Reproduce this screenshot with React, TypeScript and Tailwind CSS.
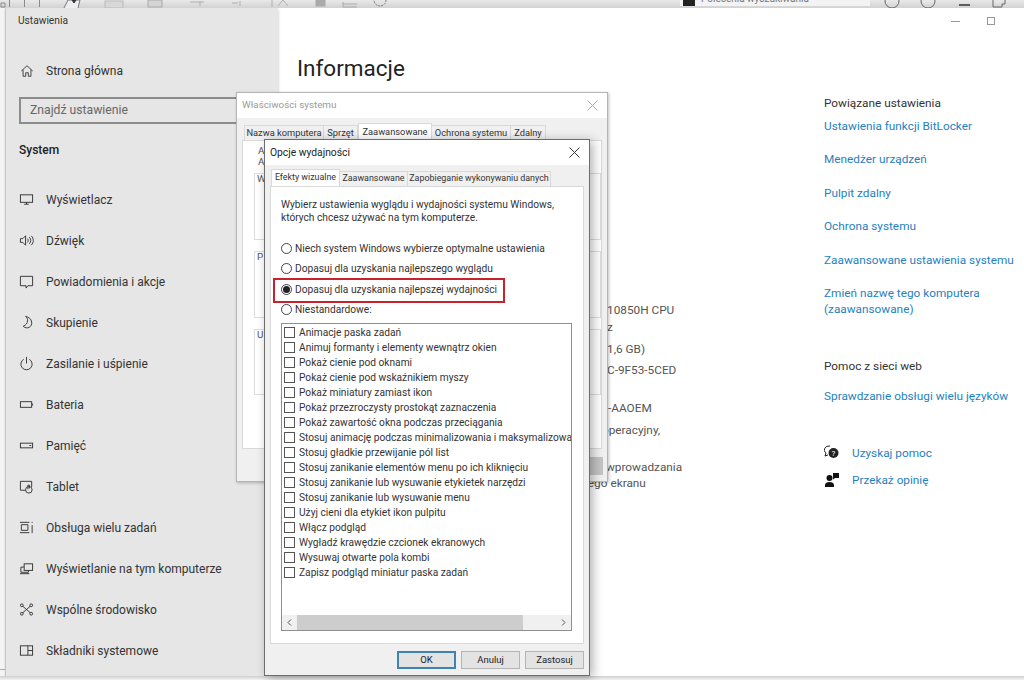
import React from "react";

const font = { fontFamily: 'Roboto, "Noto Sans", sans-serif' };

const Svg = ({ children, w = 16, h = 16 }: { children: React.ReactNode; w?: number; h?: number }) => (
  <svg width={w} height={h} viewBox="0 0 16 16" fill="none" stroke="#333" strokeWidth={1} className="shrink-0">
    {children}
  </svg>
);

const icons: Record<string, React.ReactNode> = {
  home: <path d="M1.5 8 8 2l6.5 6M3.5 6.5V14h3v-4h3v4h3V6.5" />,
  monitor: <><rect x="1.5" y="3" width="13" height="8" /><path d="M8 11v2M5.5 13h5" /></>,
  sound: <><path d="M1.5 6v4h2.5l3 3V3L4 6z" /><path d="M9 6c1 1 1 3 0 4M11 4.5c2 2 2 5 0 7M13 3c3 3 3 7 0 10" /></>,
  notif: <path d="M1.5 2.5h13v10H9.5L7.5 15v-2.5h-6z" />,
  moon: <path d="M7 1.5c3 2 3.5 8-2.5 10.5 4 4 10 0.5 9-4.5C13 4 10 2 7 1.5z" />,
  power: <><path d="M5 3.5a6 6 0 1 0 6 0" /><path d="M8 1v7" /></>,
  battery: <><rect x="1.5" y="5" width="12" height="6" /><path d="M14.5 7v2" /></>,
  storage: <><rect x="1.5" y="5.5" width="13" height="5" /><path d="M11 8h2" /></>,
  tablet: <><path d="M7 12H1.5V2.5h12v6" /><circle cx="10.5" cy="11.5" r="3.5" /><path d="M9.5 11V6.5h1.5V10" /></>,
  multi: <><path d="M1 2.5h10M1 13.5h10M2.5 5h7v6h-7zM14 2v1M14 5.500v8.500" /></>,
  project: <><rect x="5.500" y="3" width="9" height="7" /><path d="M5.500 6.500H2V12h8v-2M1 13.500h10" /></>,
  share: <><circle cx="3" cy="3.500" r="1.500" /><circle cx="13" cy="3.500" r="1.500" /><circle cx="3" cy="12.500" r="1.500" /><circle cx="13" cy="12.500" r="1.500" /><path d="M4 4.500l8 7M12 4.500l-8 7" /></>,
  comp: <><rect x="1.500" y="3" width="13" height="10" /><path d="M9.500 3v10M9.500 8h5" /></>,
};

const nav: [string, string][] = [
  ["monitor", "Wyświetlacz"],
  ["sound", "Dźwięk"],
  ["notif", "Powiadomienia i akcje"],
  ["moon", "Skupienie"],
  ["power", "Zasilanie i uśpienie"],
  ["battery", "Bateria"],
  ["storage", "Pamięć"],
  ["tablet", "Tablet"],
  ["multi", "Obsługa wielu zadań"],
  ["project", "Wyświetlanie na tym komputerze"],
  ["share", "Wspólne środowisko"],
  ["comp", "Składniki systemowe"],
];

const effects = [
  "Animacje paska zadań",
  "Animuj formanty i elementy wewnątrz okien",
  "Pokaż cienie pod oknami",
  "Pokaż cienie pod wskaźnikiem myszy",
  "Pokaż miniatury zamiast ikon",
  "Pokaż przezroczysty prostokąt zaznaczenia",
  "Pokaż zawartość okna podczas przeciągania",
  "Stosuj animację podczas minimalizowania i maksymalizowania okien",
  "Stosuj gładkie przewijanie pól list",
  "Stosuj zanikanie elementów menu po ich kliknięciu",
  "Stosuj zanikanie lub wysuwanie etykietek narzędzi",
  "Stosuj zanikanie lub wysuwanie menu",
  "Użyj cieni dla etykiet ikon pulpitu",
  "Włącz podgląd",
  "Wygładź krawędzie czcionek ekranowych",
  "Wysuwaj otwarte pola kombi",
  "Zapisz podgląd miniatur paska zadań",
];

const related = [
  "Ustawienia funkcji BitLocker",
  "Menedżer urządzeń",
  "Pulpit zdalny",
  "Ochrona systemu",
  "Zaawansowane ustawienia systemu",
];

const Radio = ({ label, checked }: { label: string; checked?: boolean }) => (
  <div className="flex h-[20.500px] items-center">
    <span className="flex h-[11px] w-[11px] shrink-0 items-center justify-center rounded-full border border-[#444] bg-white">
      {checked && <span className="h-[7px] w-[7px] rounded-full bg-[#222]" />}
    </span>
    <span className="ml-[3px] whitespace-nowrap">{label}</span>
  </div>
);

const Close = ({ color }: { color: string }) => (
  <svg width="11" height="11" viewBox="0 0 11 11" stroke={color} strokeWidth={1}>
    <path d="M0.500 0.500l10 10M10.500 0.500l-10 10" />
  </svg>
);

const Btn = ({ children, primary }: { children: string; primary?: boolean }) => (
  <div
    className={`flex h-[18px] w-[59px] items-center justify-center text-[9.500px] text-[#222] ${
      primary ? "border-2 border-[#3f83b5] bg-[#e3e3e3]" : "border border-[#b5b5b5] bg-[#e3e3e3]"
    }`}
  >
    {children}
  </div>
);

export default function App() {
  return (
    <div className="relative flex h-[680px] w-[1024px] flex-col overflow-hidden bg-white text-[#222]" style={font}>
      {/* top strip of the window behind */}
      <div className="relative flex h-[8px] shrink-0 items-start overflow-hidden bg-gradient-to-b from-[#e9e9e9] to-[#d2d2d2]">
        <svg width="420" height="8" viewBox="0 0 420 8" className="shrink-0" fill="none" stroke="#8a8a8a">
          <path d="M1 3h4v4H1zM9.500 0v7M24.500 0v7M39.500 0v7" />
          <path d="M64 8l4-8h12l-2 8" stroke="#777" fill="#eee" />
          <path d="M72 0l2 3 2-3" fill="#334" stroke="#334" />
          <rect x="105" y="1" width="18" height="7" fill="#d8d8d8" stroke="#bbb" />
          <rect x="148" y="0" width="14" height="7" fill="#d4d4d4" stroke="#aaa" />
          <path d="M190 2h14M200 1v5M232 3h6M240 1v5M272 0v7M278 6l5-6 5 6" stroke="#b0b0b0" />
          <rect x="316" y="0" width="9" height="6" fill="#aaa" stroke="#aaa" />
          <path d="M343 2v5h14M343 4h14" stroke="#aaa" />
          <circle cx="380" cy="0" r="6" stroke="#777" strokeDasharray="2 1" />
        </svg>
        <div className="ml-[260px] flex h-[6px] w-[190px] shrink-0 overflow-hidden bg-[#f3f3f3] pl-[3px]">
          <span className="h-[6px] w-[12px] shrink-0 bg-[#222]" />
          <span className="-mt-[9px] ml-[6px] whitespace-nowrap text-[10px] leading-[16px] text-[#777]">Polecenia wyszukiwania</span>
        </div>
        <svg width="135" height="8" viewBox="0 0 135 8" className="ml-[10px] shrink-0" fill="none" stroke="#666">
          <circle cx="12" cy="1" r="7" />
          <circle cx="48" cy="1" r="7" />
          <path d="M79 5h11" stroke="#333" strokeWidth={1.500} />
          <path d="M113 -2h12v6h-3v3h-9z" />
        </svg>
      </div>

      <div className="flex min-h-0 flex-1">
        {/* gutter */}
        <div className="flex w-[6px] shrink-0 flex-col justify-end border-r border-[#c9c9c9] bg-[#f4f4f4] pb-[6px]">
          <div className="h-px bg-[#aaa]" />
        </div>

        {/* sidebar */}
        <aside className="flex w-[272px] shrink-0 flex-col bg-[#e6e6e6] text-[12px] text-[#333] shadow-[0_2px_3px_#bbb]">
          <div className="ml-[12px] mt-[6px] text-[10.200px] leading-[14px]">Ustawienia</div>
          <div className="ml-[14px] mt-[32.500px] flex h-[20px] items-center">
            <Svg w={14} h={14}>{icons.home}</Svg>
            <span className="ml-[12px]">Strona główna</span>
          </div>
          <div className="ml-[13px] mt-[16.500px] flex h-[27px] w-[245px] items-center border-2 border-[#8c8c8c] pl-[9px] text-[12.200px] text-[#666]">
            Znajdź ustawienie
          </div>
          <div className="ml-[13px] mt-[16px] text-[12px] font-medium leading-[20px] text-[#222]">System</div>
          <div className="mt-[19px] flex flex-col">
            {nav.map(([icon, label]) => (
              <div key={label} className="flex h-[41px] items-center pl-[13px]">
                <Svg w={15} h={15}>{icons[icon]}</Svg>
                <span className="ml-[12px] whitespace-nowrap">{label}</span>
              </div>
            ))}
          </div>
        </aside>

        {/* main */}
        <main className="relative flex min-w-0 flex-1 text-[11.800px]">
          <div className="w-[330px] shrink-0 pl-[19px]">
            <h1 className="mt-[43px] text-[22.500px] font-normal leading-[34px] text-[#222]">Informacje</h1>
          </div>
          <div className="flex w-[216px] shrink-0 flex-col pt-[294px] leading-[16px] text-[#555]">
            <div className="-ml-[1px] whitespace-nowrap">10850H CPU</div>
            <div className="-ml-[1px] mt-[1px]">z</div>
            <div className="-ml-[1px] mt-[6px] whitespace-nowrap">1,6 GB)</div>
            <div className="-ml-[1px] mt-[5px] whitespace-nowrap">C-9F53-5CED</div>
            <div className="mt-[22px] whitespace-nowrap">-AAOEM</div>
            <div className="-ml-[6px] mt-[6px] whitespace-nowrap">operacyjny,</div>
            <div className="-ml-[2px] mt-[21px] whitespace-nowrap">wprowadzania</div>
            <div className="-ml-[24px] whitespace-nowrap">tego ekranu</div>
          </div>
          <div className="flex min-w-0 flex-1 flex-col leading-[16px] text-[#1f7fc0]">
            <div className="mt-[87px] text-[#333]">Powiązane ustawienia</div>
            <div className="mt-[6.500px] flex flex-col gap-[17.500px]">
              {related.map((r) => (
                <div key={r} className="whitespace-nowrap">{r}</div>
              ))}
              <div>
                Zmień nazwę tego komputera
                <br />
                (zaawansowane)
              </div>
            </div>
            <div className="mt-[41px] text-[#333]">Pomoc z sieci web</div>
            <div className="mt-[14px] whitespace-nowrap">Sprawdzanie obsługi wielu języków</div>
            <div className="mt-[41px] flex items-center">
              <svg width="16" height="16" viewBox="0 0 16 16" className="shrink-0">
                <path d="M6 1a5 4 0 0 0-4 7l-1 3 3-1" fill="none" stroke="#222" />
                <circle cx="9.500" cy="8" r="5" fill="#222" />
                <text x="7.500" y="11" fontSize="8" fill="#fff">?</text>
              </svg>
              <span className="ml-[12px]">Uzyskaj pomoc</span>
            </div>
            <div className="mt-[11px] flex items-center">
              <svg width="16" height="16" viewBox="0 0 16 16" fill="#111" className="shrink-0">
                <path d="M9 1h6v5h-4l-2 1.500z" />
                <circle cx="5.500" cy="6" r="3" />
                <path d="M1 15v-2c0-2 2-3 4.500-3s4.500 1 4.500 3v2z" />
              </svg>
              <span className="ml-[12px]">Przekaż opinię</span>
            </div>
          </div>
          <div className="absolute right-[29px] top-[9px] flex items-center gap-[27px]">
            <span className="h-px w-[9px] bg-[#999]" />
            <span className="h-[8px] w-[8px] border border-[#999]" />
          </div>
        </main>
      </div>
      <div className="h-[4px] shrink-0 bg-gradient-to-b from-[#cfcfcf] to-[#f4f4f4]" />

      {/* Właściwości systemu */}
      <div className="absolute left-[236px] top-[92px] flex h-[390px] w-[372px] flex-col border border-[#b5b5b5] bg-[#f0f0f0] text-[9.800px] shadow-[1px_1px_3px_rgba(0,0,0,0.25)]">
        <div className="flex h-[25px] shrink-0 items-center justify-between bg-white pl-[5px] pr-[9px] text-[#9a9a9a]">
          <span>Właściwości systemu</span>
          <Close color="#aaa" />
        </div>
        <div className="mt-[6px] flex h-[16px] items-end whitespace-nowrap pl-[7px] text-[9.300px] text-[#333]">
          <span className="flex h-[15px] w-[80px] items-center justify-center border border-b-0 border-[#d9d9d9]">Nazwa komputera</span>
          <span className="flex h-[15px] w-[34px] items-center justify-center border border-b-0 border-l-0 border-[#d9d9d9]">Sprzęt</span>
          <span className="flex h-[17px] w-[74px] items-center justify-center border border-b-0 border-[#d9d9d9] bg-white">Zaawansowane</span>
          <span className="flex h-[15px] w-[79px] items-center justify-center border border-b-0 border-l-0 border-[#d9d9d9]">Ochrona systemu</span>
          <span className="flex h-[15px] w-[35px] items-center justify-center border border-b-0 border-l-0 border-[#d9d9d9]">Zdalny</span>
        </div>
        <div className="mx-[5px] flex h-[309px] flex-col border border-[#d9d9d9] bg-white pl-[15px] pt-[4px] text-[#555]">
          <div className="leading-[11px]">A<br />A</div>
          <div className="-ml-[4px] mt-[6px] flex h-[67px] border border-[#ddd] pl-[2px] leading-[10px]">W</div>
          <div className="-ml-[4px] mt-[11px] flex h-[67px] border border-[#ddd] pl-[2px] leading-[10px]">P</div>
          <div className="-ml-[4px] mt-[11px] flex h-[66px] border border-[#ddd] pl-[2px] leading-[10px]">U</div>
        </div>
        <div className="mr-[4px] mt-[8px] flex justify-end">
          <div className="h-[18px] w-[14px] bg-[#c4c4c4]" />
        </div>
      </div>

      {/* Opcje wydajności */}
      <div className="absolute left-[264px] top-[139px] flex h-[537px] w-[326px] flex-col border border-[#6d6d6d] bg-[#f0f0f0] text-[10.200px] text-[#333] shadow-[3px_2px_10px_rgba(0,0,0,0.3)]">
        <div className="flex h-[25px] shrink-0 items-center justify-between bg-white pl-[5px] pr-[9px] text-[10.300px] text-[#222]">
          <span>Opcje wydajności</span>
          <Close color="#333" />
        </div>
        <div className="mt-[5px] flex h-[16px] shrink-0 items-end whitespace-nowrap pl-[6px] text-[8.900px]">
          <span className="flex h-[17px] w-[69px] items-center justify-center border border-b-0 border-[#d9d9d9] bg-white">Efekty wizualne</span>
          <span className="flex h-[15px] w-[68px] items-center justify-center border border-b-0 border-l-0 border-[#d9d9d9]">Zaawansowane</span>
          <span className="flex h-[15px] w-[143px] items-center justify-center border border-b-0 border-l-0 border-[#d9d9d9]">Zapobieganie wykonywaniu danych</span>
        </div>
        <div className="relative mx-[5px] flex h-[458px] shrink-0 flex-col border border-[#d9d9d9] bg-white pl-[10px] pr-[10px]">
          <p className="mt-[11px] whitespace-nowrap leading-[13px]">
            Wybierz ustawienia wyglądu i wydajności systemu Windows,
            <br />
            których chcesz używać na tym komputerze.
          </p>
          <div className="mt-[14px] flex flex-col">
            <Radio label="Niech system Windows wybierze optymalne ustawienia" />
            <Radio label="Dopasuj dla uzyskania najlepszego wyglądu" />
            <Radio label="Dopasuj dla uzyskania najlepszej wydajności" checked />
            <Radio label="Niestandardowe:" />
          </div>
          <div className="pointer-events-none absolute left-[2px] top-[91px] h-[25px] w-[232px] border-2 border-[#c8232c]" />
          <div className="mt-[3px] flex h-[308px] w-[291px] flex-col overflow-hidden border border-[#8f8f8f] bg-white">
            <div className="flex min-h-0 flex-1 flex-col pt-[1px]">
              {effects.map((e) => (
                <div key={e} className="flex h-[15px] shrink-0 items-center pl-[2px]">
                  <span className="h-[11px] w-[11px] shrink-0 border border-[#555] bg-white" />
                  <span className="ml-[4px] whitespace-nowrap">{e}</span>
                </div>
              ))}
            </div>
            <div className="flex h-[15px] shrink-0 items-center bg-[#f0f0f0] text-[#555]">
              <svg width="15" height="15" viewBox="0 0 15 15" fill="none" stroke="#555" className="shrink-0">
                <path d="M9 4.500l-3 3 3 3" />
              </svg>
              <div className="h-full w-[226px] bg-[#cdcdcd]" />
              <div className="flex-1" />
              <svg width="15" height="15" viewBox="0 0 15 15" fill="none" stroke="#555" className="shrink-0">
                <path d="M6 4.500l3 3-3 3" />
              </svg>
            </div>
          </div>
        </div>
        <div className="mt-[7px] flex justify-end gap-[5px] pr-[5px]">
          <Btn primary>OK</Btn>
          <Btn>Anuluj</Btn>
          <Btn>Zastosuj</Btn>
        </div>
      </div>
    </div>
  );
}
